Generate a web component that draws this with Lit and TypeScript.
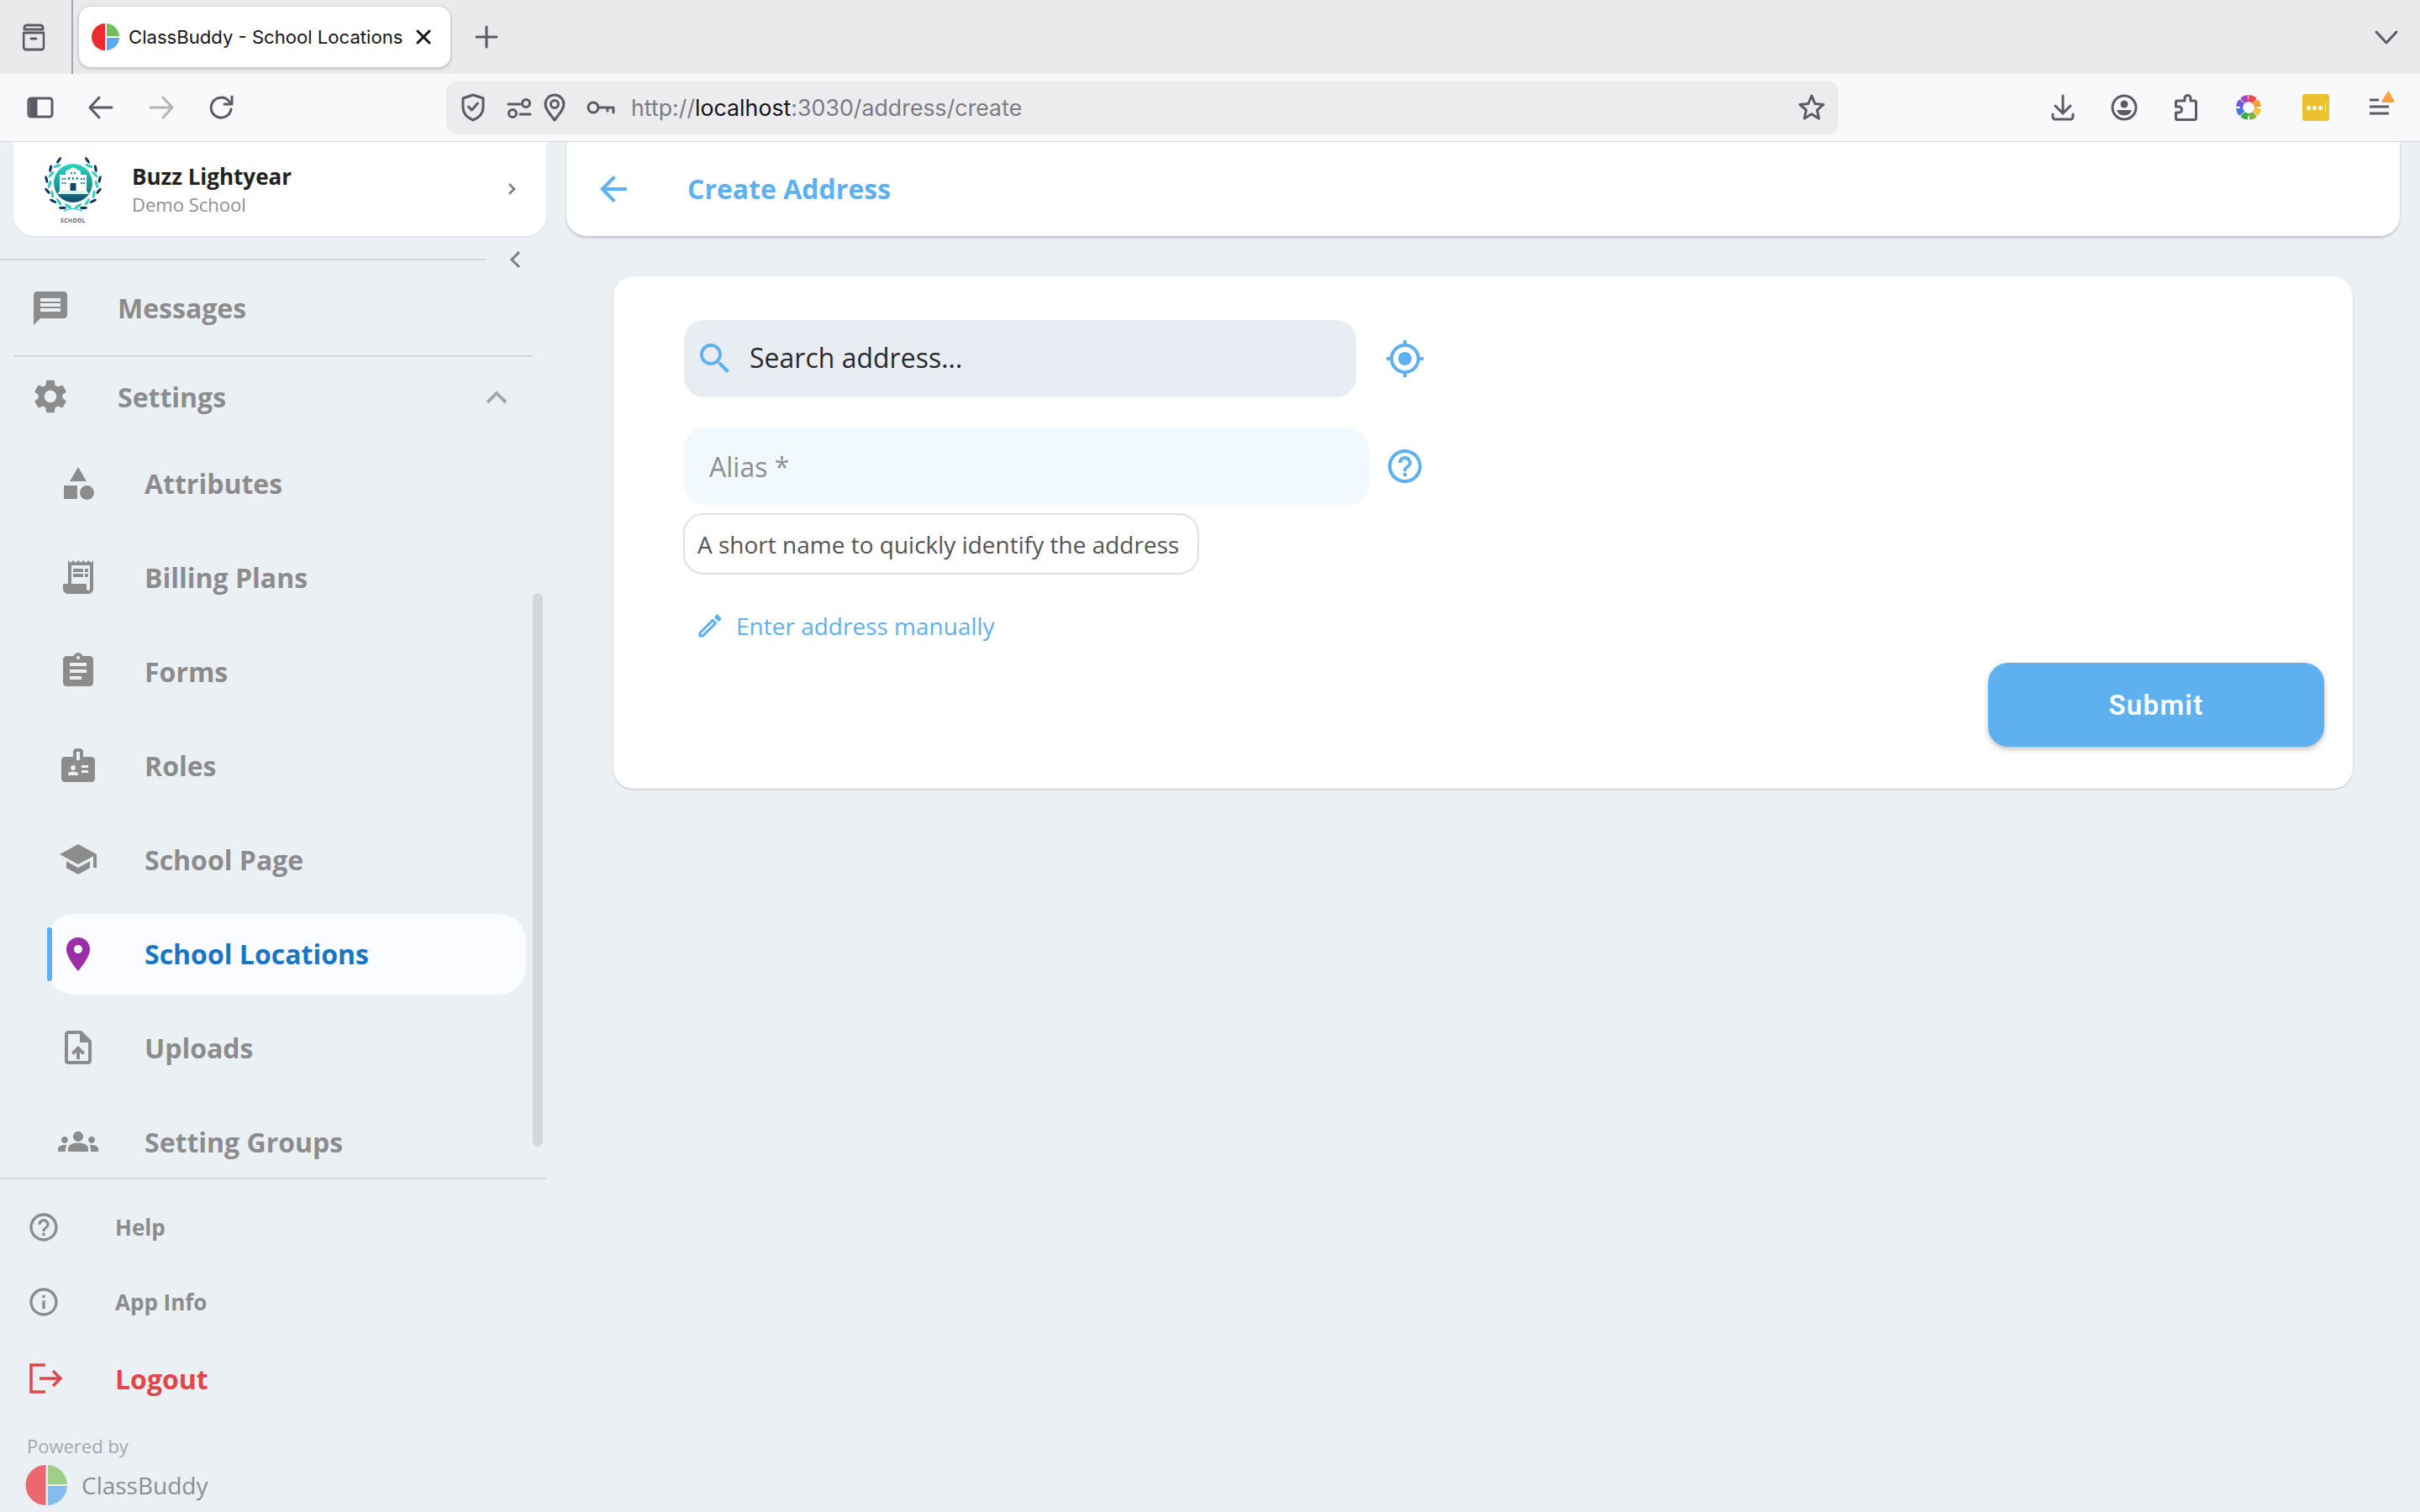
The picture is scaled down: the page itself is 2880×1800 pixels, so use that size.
import { LitElement, css, html, svg } from "lit";
import { customElement } from "lit/decorators.js";

const P = {
  message:
    "M20 2H4c-1.1 0-1.99.9-1.99 2L2 22l4-4h14c1.1 0 2-.9 2-2V4c0-1.1-.9-2-2-2zm-2 12H6v-2h12v2zm0-3H6V9h12v2zm0-3H6V6h12v2z",
  gear: "M19.14 12.94c.04-.3.06-.61.06-.94 0-.32-.02-.64-.07-.94l2.03-1.58c.18-.14.23-.41.12-.61l-1.92-3.32c-.12-.22-.37-.29-.59-.22l-2.39.96c-.5-.38-1.03-.7-1.62-.94l-.36-2.54c-.04-.24-.24-.41-.48-.41h-3.84c-.24 0-.43.17-.47.41l-.36 2.54c-.59.24-1.13.57-1.62.94l-2.39-.96c-.22-.08-.47 0-.59.22L2.74 8.87c-.12.21-.08.47.12.61l2.03 1.58c-.05.3-.09.63-.09.94s.02.64.07.94l-2.03 1.58c-.18.14-.23.41-.12.61l1.92 3.32c.12.22.37.29.59.22l2.39-.96c.5.38 1.03.7 1.62.94l.36 2.54c.05.24.24.41.48.41h3.84c.24 0 .44-.17.47-.41l.36-2.54c.59-.24 1.13-.56 1.62-.94l2.39.96c.22.08.47 0 .59-.22l1.92-3.32c.12-.22.07-.47-.12-.61l-2.01-1.58zM12 15.6c-1.98 0-3.6-1.62-3.6-3.6s1.62-3.6 3.6-3.6 3.6 1.62 3.6 3.6-1.62 3.6-3.6 3.6z",
  shapes:
    "M12 2.5 7 11h10zM3.500 13.500h8v8h-8zM17.250 13.500a4.250 4.250 0 1 0 0 8.500 4.250 4.250 0 0 0 0-8.500z",
  receipt:
    "M19.500 3.500 18 2l-1.500 1.500L15 2l-1.500 1.500L12 2l-1.500 1.500L9 2 7.500 3.500 6 2v14H3v3c0 1.660 1.340 3 3 3h12c1.660 0 3-1.340 3-3V2l-1.500 1.500zM19 19c0 .550-.450 1-1 1s-1-.450-1-1v-3H8V5h11v14zM9 7h6v2H9zm7 0h2v2h-2zM9 10h6v2H9zm7 0h2v2h-2z",
  forms:
    "M19 3h-4.180C14.400 1.840 13.300 1 12 1c-1.300 0-2.400.840-2.820 2H5c-1.100 0-2 .900-2 2v14c0 1.100.900 2 2 2h14c1.100 0 2-.900 2-2V5c0-1.100-.900-2-2-2zm-7 0c.550 0 1 .450 1 1s-.450 1-1 1-1-.450-1-1 .450-1 1-1zm2 14H7v-2h7v2zm3-4H7v-2h10v2zm0-4H7V7h10v2z",
  badge:
    "M20 7h-5V4c0-1.100-.900-2-2-2h-2c-1.100 0-2 .900-2 2v3H4c-1.100 0-2 .900-2 2v11c0 1.100.900 2 2 2h16c1.100 0 2-.900 2-2V9c0-1.100-.900-2-2-2zM9 12c.830 0 1.500.670 1.500 1.500S9.830 15 9 15s-1.500-.670-1.500-1.500S8.170 12 9 12zm3 6H6v-.430c0-.600.360-1.150.920-1.390.640-.280 1.340-.430 2.080-.430s1.440.150 2.080.430c.550.240.920.780.920 1.390V18zm1-9h-2V4h2v5zm5 7.500h-4V15h4v1.500zm0-3h-4V12h4v1.500z",
  school: "M5 13.180v4L12 21l7-3.820v-4L12 17l-7-3.820zM12 3 1 9l11 6 9-4.910V17h2V9L12 3z",
  place:
    "M12 2C8.130 2 5 5.130 5 9c0 5.250 7 13 7 13s7-7.750 7-13c0-3.870-3.130-7-7-7zm0 9.500c-1.380 0-2.500-1.120-2.500-2.500s1.120-2.500 2.500-2.500 2.500 1.120 2.500 2.500-1.120 2.500-2.500 2.500z",
  upload:
    "M14 2H6c-1.100 0-1.990.900-1.990 2L4 20c0 1.100.890 2 1.990 2H18c1.100 0 2-.900 2-2V8l-6-6zm4 18H6V4h7v5h5v11zM8 15.010l1.410 1.410L11 14.840V19h2v-4.160l1.590 1.590L16 15.010 12.010 11z",
  groups:
    "M12 12.750c1.630 0 3.070.390 4.240.900 1.080.480 1.760 1.560 1.760 2.730V18H6v-1.610c0-1.180.680-2.260 1.760-2.730 1.170-.520 2.610-.910 4.240-.910zM4 13c1.100 0 2-.900 2-2s-.900-2-2-2-2 .900-2 2 .900 2 2 2zm1.130 1.100c-.370-.060-.740-.100-1.130-.100-.990 0-1.930.210-2.780.580C.480 14.900 0 15.620 0 16.430V18h4.500v-1.610c0-.830.230-1.610.630-2.290zM20 13c1.100 0 2-.900 2-2s-.900-2-2-2-2 .900-2 2 .900 2 2 2zm4 3.430c0-.810-.480-1.530-1.220-1.850-.850-.370-1.790-.580-2.780-.580-.390 0-.760.040-1.130.100.400.680.630 1.460.630 2.290V18H24v-1.570zM12 6c1.660 0 3 1.340 3 3s-1.340 3-3 3-3-1.340-3-3 1.340-3 3-3z",
  help: "M11 18h2v-2h-2v2zm1-16C6.480 2 2 6.480 2 12s4.480 10 10 10 10-4.480 10-10S17.520 2 12 2zm0 18c-4.410 0-8-3.590-8-8s3.590-8 8-8 8 3.590 8 8-3.590 8-8 8zm0-14c-2.210 0-4 1.790-4 4h2c0-1.100.900-2 2-2s2 .900 2 2c0 2-3 1.750-3 5h2c0-2.250 3-2.500 3-5 0-2.210-1.790-4-4-4z",
  info: "M11 7h2v2h-2zm0 4h2v6h-2zm1-9C6.480 2 2 6.480 2 12s4.480 10 10 10 10-4.480 10-10S17.520 2 12 2zm0 18c-4.410 0-8-3.590-8-8s3.590-8 8-8 8 3.590 8 8-3.590 8-8 8z",
  search:
    "M15.500 14h-.790l-.280-.270C15.410 12.590 16 11.110 16 9.500 16 5.910 13.090 3 9.500 3S3 5.910 3 9.500 5.910 16 9.500 16c1.610 0 3.090-.590 4.230-1.570l.270.280v.790l5 4.990L20.490 19l-4.990-5zm-6 0C7.010 14 5 11.990 5 9.500S7.010 5 9.500 5 14 7.010 14 9.500 11.990 14 9.500 14z",
  gps: "M12 8c-2.210 0-4 1.790-4 4s1.790 4 4 4 4-1.790 4-4-1.790-4-4-4zm8.940 3c-.460-4.170-3.770-7.480-7.940-7.940V1h-2v2.060C6.830 3.520 3.520 6.830 3.060 11H1v2h2.060c.460 4.170 3.770 7.480 7.940 7.940V23h2v-2.060c4.170-.460 7.480-3.770 7.940-7.940H23v-2h-2.060zM12 19c-3.870 0-7-3.130-7-7s3.130-7 7-7 7 3.130 7 7-3.130 7-7 7z",
  edit: "M3 17.250V21h3.750L17.810 9.940l-3.750-3.750L3 17.250zM5.920 19H5v-.920l9.060-9.060.920.920L5.920 19zM20.710 5.630l-2.340-2.340c-.200-.200-.450-.290-.710-.290s-.510.100-.700.290l-1.830 1.830 3.750 3.750 1.830-1.830c.390-.390.390-1.020 0-1.410z",
  back: "M20 11H7.830l5.590-5.590L12 4l-8 8 8 8 1.410-1.410L7.830 13H20v-2z",
};

const icon = (d: string, cls = "") =>
  html`<svg class="ico ${cls}" viewBox="0 0 24 24"><path d=${d}></path></svg>`;

const settingsRows = [
  { label: "Attributes", d: P.shapes },
  { label: "Billing Plans", d: P.receipt },
  { label: "Forms", d: P.forms },
  { label: "Roles", d: P.badge },
  { label: "School Page", d: P.school },
  { label: "School Locations", d: P.place, active: true },
  { label: "Uploads", d: P.upload },
  { label: "Setting Groups", d: P.groups },
];

// one half of the crest's wreath, the other half is this one mirrored
function wreathHalf() {
  const leaf = (theta: number, r: number, tilt: number, fill: string, ry: number) => {
    const a = (theta * Math.PI) / 180;
    const x = 37 + Math.sin(a) * r;
    const y = 32 - Math.cos(a) * r;
    return svg`<ellipse cx=${x} cy=${y} rx="1.600" ry=${ry} fill=${fill} transform="rotate(${theta + 90 + tilt} ${x} ${y})"></ellipse>`;
  };
  const out = [];
  for (let i = 0; i < 6; i++) {
    const theta = 32 + i * 25;
    out.push(leaf(theta, 32, 22, "#14305f", 4.4));
    out.push(leaf(theta + 11, 28, -20, "#2ecfbd", 4.8));
  }
  return out;
}

@customElement("app-root")
export class AppRoot extends LitElement {
  static styles = css`
    :host {
      display: block;
      width: 2880px;
      height: 1800px;
      overflow: hidden;
      background: #ebf0f5;
      font-family: "Open Sans", "Noto Sans", sans-serif;
    }
    svg {
      display: block;
      flex: none;
      overflow: visible;
    }
    .ico {
      width: 48px;
      height: 48px;
      fill: currentColor;
    }
    .line {
      fill: none;
      stroke: #5b5b66;
      stroke-width: 3;
      stroke-linecap: round;
      stroke-linejoin: round;
    }
    .line.dark {
      stroke: #15141a;
    }
    .line.dim {
      stroke: #b4b4b9;
    }
    .line.butt {
      stroke-linecap: butt;
    }

    /* browser chrome */
    .tabbar {
      height: 88px;
      background: #eaeaed;
      display: flex;
      align-items: center;
    }
    .tab-side {
      width: 85px;
      height: 88px;
      border-right: 2px solid #a5a5ab;
      box-sizing: content-box;
      display: flex;
      align-items: center;
    }
    .tab-side svg {
      margin-left: 24px;
    }
    .tab {
      margin-left: 7px;
      width: 442px;
      height: 72px;
      border-radius: 14px;
      background: #fff;
      box-shadow: 0 1px 4px rgba(0, 0, 0, 0.28);
      display: flex;
      align-items: center;
      padding-left: 16px;
      box-sizing: border-box;
      font: 400 22.100px "Inter", sans-serif;
      color: #15141a;
      white-space: nowrap;
    }
    .tab-title {
      margin-left: 11px;
      width: 341px;
    }
    .newtab {
      margin-left: 29px;
    }
    .tab-end {
      margin-left: auto;
      margin-right: 26px;
    }
    .toolbar {
      height: 80px;
      border-bottom: 1px solid #d6d6d9;
      box-sizing: content-box;
      background: #f9f9fb;
      display: flex;
      align-items: center;
    }
    .nav {
      margin-left: 12px;
      display: grid;
      grid-template-columns: repeat(4, 72px);
      justify-items: center;
      align-items: center;
    }
    .urlbar {
      margin-left: 231px;
      width: 1657px;
      height: 64px;
      border-radius: 14px;
      background: #ececef;
      display: grid;
      grid-template-columns: 64px 46px 38px 72px 1fr 64px;
      justify-items: center;
      align-items: center;
    }
    .url {
      justify-self: start;
      font: 400 26.750px "Inter", sans-serif;
      color: #7b7b82;
      white-space: nowrap;
    }
    .url b {
      font-weight: 400;
      color: #15141a;
    }
    .tools {
      margin-left: 230px;
      display: grid;
      grid-template-columns: 73px 73px 74px 75px 86px 66px;
      justify-items: center;
      align-items: center;
    }
    .wheel {
      width: 30px;
      height: 30px;
      border-radius: 50%;
      background: conic-gradient(
        #f04c4c 3deg 42deg,
        #fff 42deg 48deg,
        #f7a02d 48deg 87deg,
        #fff 87deg 93deg,
        #fcc232 93deg 132deg,
        #fff 132deg 138deg,
        #7cb82f 138deg 177deg,
        #fff 177deg 183deg,
        #38ad55 183deg 222deg,
        #fff 222deg 228deg,
        #4a72e8 228deg 267deg,
        #fff 267deg 273deg,
        #7456e0 273deg 312deg,
        #fff 312deg 318deg,
        #a946c8 318deg 357deg,
        #fff 357deg 3deg
      );
      -webkit-mask: radial-gradient(circle, transparent 6.500px, #000 7px);
      mask: radial-gradient(circle, transparent 6.500px, #000 7px);
    }
    .lastpass {
      width: 32px;
      height: 32px;
      border-radius: 3px;
      background: #ecc02e;
      display: flex;
      align-items: center;
      justify-content: center;
      gap: 2px;
    }
    .lastpass i {
      width: 5px;
      height: 5px;
      border-radius: 50%;
      background: #fff;
    }
    .lastpass u {
      width: 1px;
      height: 12px;
      margin-left: 1px;
      background: #fff;
    }

    /* page */
    .page {
      display: flex;
      height: 1631px;
    }
    .sidebar {
      width: 650px;
      flex: none;
      color: #8c8c8c;
    }
    .who {
      margin-left: 16px;
      width: 634px;
      height: 112px;
      border-radius: 0 0 24px 24px;
      background: #fff;
      box-sizing: border-box;
      padding-left: 34px;
      display: flex;
      align-items: center;
      box-shadow: 0 1px 2px rgba(0, 0, 0, 0.08);
    }
    .who-logo {
      margin-top: 6px;
    }
    .who-text {
      margin-left: 31px;
      flex: 1;
    }
    .who-name {
      font-size: 26px;
      font-weight: 700;
      line-height: 36px;
      color: #222;
    }
    .who-sub {
      font-size: 22px;
      line-height: 30px;
      color: #8f8f8f;
    }
    .who-arrow {
      margin-right: 31px;
      color: #7d7d7d;
    }
    .collapse {
      margin-top: 27px;
      height: 2px;
      display: flex;
      align-items: center;
    }
    .collapse span {
      width: 578px;
      height: 2px;
      background: #d3d8dc;
    }
    .collapse svg {
      margin-left: 22px;
    }
    .menu {
      position: relative;
      height: 1092px;
      overflow: hidden;
    }
    .thumb {
      position: absolute;
      left: 634px;
      top: 396px;
      width: 12px;
      height: 659px;
      border-radius: 6px;
      background: #d2d8dc;
    }
    .row {
      display: flex;
      align-items: center;
      font-size: 32px;
      font-weight: 700;
      white-space: nowrap;
    }
    .top {
      height: 113px;
      padding-left: 36px;
      gap: 56px;
    }
    .top.settings {
      height: 94px;
    }
    .sep {
      margin-left: 16px;
      width: 618px;
      height: 2px;
      background: #d3d8dc;
    }
    .caret {
      margin-left: auto;
      margin-right: 45px;
    }
    .sub {
      height: 112px;
      padding-left: 69px;
      gap: 55px;
    }
    .sub.active {
      height: 96px;
      margin: 9px 24px 7px 56px;
      padding-left: 13px;
      position: relative;
      border-radius: 32px;
      background: #fafcff;
      color: #1976c2;
    }
    .sub.active span {
      margin-bottom: 2px;
    }
    .sub.active::before {
      content: "";
      position: absolute;
      left: 0;
      top: 16px;
      width: 6px;
      height: 64px;
      border-radius: 3px;
      background: #5fb0ee;
    }
    .sub.active .ico {
      color: #9c2ea8;
    }
    .foot {
      border-top: 2px solid #d3d8dc;
      padding-top: 13px;
    }
    .foot .row {
      height: 88.500px;
      padding-left: 32px;
      gap: 65px;
      font-size: 26px;
    }
    .foot .ico {
      width: 40px;
      height: 40px;
    }
    .foot .row.logout {
      height: 94px;
      font-size: 32px;
      color: #e0474c;
      padding-left: 35px;
      gap: 62px;
    }
    .powered {
      margin: 18px 0 8px 32px;
      font-size: 22px;
      line-height: 30px;
      color: #a5a8ab;
    }
    .brand {
      margin-left: 32px;
      display: flex;
      align-items: center;
      gap: 17px;
      font-size: 28px;
      color: #8a8f93;
    }

    .main {
      flex: 1;
    }
    .head {
      margin-left: 24px;
      width: 2182px;
      height: 112px;
      border-radius: 0 0 24px 24px;
      background: #fff;
      box-shadow: 0 2px 3px rgba(0, 0, 0, 0.2);
      display: flex;
      align-items: center;
      padding-left: 32px;
      box-sizing: border-box;
      gap: 64px;
      color: #5fb0ee;
      font-size: 32px;
      font-weight: 700;
    }
    .head span {
      margin-bottom: 2px;
    }
    .card {
      margin: 48px 0 0 80px;
      width: 2070px;
      border-radius: 24px;
      background: #fff;
      box-shadow: 0 1px 2px rgba(0, 0, 0, 0.2);
      box-sizing: border-box;
      padding: 52px 34px 50px 84px;
    }
    .field-row {
      display: flex;
      align-items: center;
      color: #5fb0ee;
    }
    .search {
      width: 800px;
      height: 92px;
      border-radius: 24px;
      background: #e8edf4;
      display: flex;
      align-items: center;
      padding-left: 13px;
      gap: 17px;
      box-sizing: border-box;
      margin-right: 34px;
      font-size: 32px;
      color: #2a2a2a;
    }
    .search .ico {
      color: #5fb0ee;
    }
    .search span {
      margin-bottom: 4px;
    }
    .alias {
      margin-top: 36px;
    }
    .alias-box {
      width: 815px;
      height: 92px;
      border-radius: 24px;
      background: #f1f8fe;
      box-sizing: border-box;
      padding-left: 30px;
      display: flex;
      align-items: center;
      margin-right: 19px;
      font-size: 32px;
      color: #8f8f8f;
    }
    .hint {
      margin: 10px 0 0 -1px;
      width: 614px;
      height: 73px;
      border: 2px solid #e0e0e0;
      border-radius: 24px;
      box-sizing: border-box;
      padding-left: 15px;
      display: flex;
      align-items: center;
      font-size: 28px;
      color: #555;
      white-space: nowrap;
    }
    .manual {
      margin: 45px 0 0 13px;
      height: 32px;
      display: flex;
      align-items: center;
      gap: 13px;
      font-size: 28px;
      color: #5fb0ee;
    }
    .manual .ico {
      width: 36px;
      height: 36px;
    }
    .actions {
      margin-top: 28px;
      display: flex;
      justify-content: flex-end;
    }
    .submit {
      width: 400px;
      height: 100px;
      border: none;
      border-radius: 24px;
      background: #5fb0ee;
      box-shadow: 0 3px 6px rgba(0, 0, 0, 0.25);
      color: #fff;
      font: 600 33px "Roboto", sans-serif;
      letter-spacing: 1.300px;
    }
  `;

  renderLogo() {
    return html`<svg class="who-logo" width="76" height="84" viewBox="0 0 76 84">
      <defs>
        <linearGradient id="crest" x1="0" y1="0" x2="0" y2="1">
          <stop offset="0" stop-color="#2ad6bd"></stop>
          <stop offset="0.6" stop-color="#19958f"></stop>
          <stop offset="1" stop-color="#14466e"></stop>
        </linearGradient>
      </defs>
      <g>${wreathHalf()}</g>
      <g transform="translate(74 0) scale(-1 1)">${wreathHalf()}</g>
      <circle cx="37" cy="32" r="23" fill="url(#crest)"></circle>
      <path d="M37 13l9 5v4h7v19H21V22h7v-4z" fill="#fff"></path>
      <g fill="#1a8f92">
        <rect x="34" y="19" width="2.200" height="2.200"></rect>
        <rect x="38" y="19" width="2.200" height="2.200"></rect>
        <rect x="31" y="25" width="2.200" height="3"></rect>
        <rect x="35.800" y="25" width="2.200" height="3"></rect>
        <rect x="40.500" y="25" width="2.200" height="3"></rect>
        <rect x="23.500" y="26" width="2" height="2"></rect>
        <rect x="26.500" y="26" width="2" height="2"></rect>
        <rect x="23.500" y="31" width="2" height="2"></rect>
        <rect x="26.500" y="31" width="2" height="2"></rect>
        <rect x="46" y="26" width="2" height="2"></rect>
        <rect x="49" y="26" width="2" height="2"></rect>
        <rect x="46" y="31" width="2" height="2"></rect>
        <rect x="49" y="31" width="2" height="2"></rect>
      </g>
      <rect x="33.500" y="32" width="7" height="9" fill="#14466e"></rect>
      <path d="M21 41h32l3 4H18z" fill="#d9f4f1"></path>
      <path d="M26 65q11-5 22 0" fill="none" stroke="#2ecfbd" stroke-width="1.500"></path>
      <text
        x="37"
        y="79"
        text-anchor="middle"
        font-family="Open Sans, sans-serif"
        font-size="6.500"
        font-weight="600"
        letter-spacing="0.600"
        fill="#14305f"
      >SCHOOL</text>
    </svg>`;
  }

  renderBrowser() {
    return html`
      <div class="tabbar">
        <div class="tab-side">
          <svg width="32" height="32" viewBox="0 0 32 32" class="line">
            <path d="M2 11h28v17a3 3 0 0 1-3 3H5a3 3 0 0 1-3-3z" transform="translate(2.500 0) scale(.85 1)"></path>
            <path d="M8 2h16a3 3 0 0 1 3 3v2H5V5a3 3 0 0 1 3-3zM13 18h6"></path>
          </svg>
        </div>
        <div class="tab">
          <svg width="32" height="32" viewBox="0 0 32 32">
            <path d="M15 0a16 16 0 0 0 0 32z" fill="#ee2b30"></path>
            <path d="M17 0a16 16 0 0 1 15 15H17z" fill="#72bd5c"></path>
            <path d="M17 17h15a16 16 0 0 1-15 15z" fill="#5ba8ee"></path>
          </svg>
          <span class="tab-title">ClassBuddy - School Locations</span>
          <svg width="20" height="20" viewBox="0 0 20 20" class="line dark">
            <path d="M3 3l14 14M17 3 3 17"></path>
          </svg>
        </div>
        <svg class="line newtab" width="28" height="28" viewBox="0 0 28 28">
          <path d="M14 2v24M2 14h24"></path>
        </svg>
        <svg class="line tab-end" width="28" height="28" viewBox="0 0 28 28">
          <path d="M2 8l12 13L26 8"></path>
        </svg>
      </div>
      <div class="toolbar">
        <div class="nav">
          <svg class="line" width="32" height="32" viewBox="0 0 32 32">
            <rect x="2" y="5" width="28" height="22" rx="3"></rect>
            <path d="M5 7h6v18H5z" fill="#5b5b66"></path>
          </svg>
          <svg class="line" width="32" height="32" viewBox="0 0 32 32">
            <path d="M29 16H3M14 4 3 16l11 12"></path>
          </svg>
          <svg class="line dim" width="32" height="32" viewBox="0 0 32 32">
            <path d="M3 16h26M18 4l11 12-11 12"></path>
          </svg>
          <svg class="line" width="32" height="32" viewBox="0 0 32 32">
            <path d="M27 18a12 12 0 1 1-3-10l4 4M28 3v9h-9"></path>
          </svg>
        </div>
        <div class="urlbar">
          <svg class="line" width="32" height="34" viewBox="0 0 32 34">
            <path d="M16 2l12 4v11c0 7-5 12-12 15C9 29 4 24 4 17V6z"></path>
            <path d="M10.500 16l4 4 7-8"></path>
          </svg>
          <svg class="line" width="30" height="28" viewBox="0 0 30 28">
            <path d="M2 10h14M16 22h12"></path>
            <circle cx="23" cy="9" r="4.500"></circle>
            <circle cx="7" cy="21" r="4.500"></circle>
          </svg>
          <svg class="line" width="28" height="34" viewBox="0 0 28 34">
            <path d="M14 32C8 24 3 19 3 13a11 11 0 0 1 22 0c0 6-5 11-11 19z"></path>
            <circle cx="14" cy="13" r="4.500"></circle>
          </svg>
          <svg class="line" width="34" height="20" viewBox="0 0 34 20">
            <circle cx="8" cy="10" r="6"></circle>
            <path d="M14 10h18v6M25 10v4"></path>
          </svg>
          <span class="url">http://<b>localhost</b>:3030/address/create</span>
          <svg class="line" width="34" height="34" viewBox="0 0 34 34">
            <path
              d="M17 3l4 9.500 10 .9-7.500 6.700 2.200 10L17 24.800 8.300 30l2.200-10L3 13.400l10-.9z"
            ></path>
          </svg>
        </div>
        <div class="tools">
          <svg class="line" width="30" height="32" viewBox="0 0 30 32">
            <path d="M15 2v20M6 14l9 9 9-9M3 24v3a3 3 0 0 0 3 3h18a3 3 0 0 0 3-3v-3"></path>
          </svg>
          <svg width="32" height="32" viewBox="0 0 32 32">
            <circle class="line" cx="16" cy="16" r="14"></circle>
            <circle cx="16" cy="12" r="4.500" fill="#5b5b66"></circle>
            <path d="M7 19h18a9.500 9.500 0 0 1-18 0z" fill="#5b5b66"></path>
          </svg>
          <svg class="line" width="28" height="32" viewBox="0 0 28 32">
            <path
              d="M13 7V5a3.500 3.500 0 0 1 7 0v3h5a1.500 1.500 0 0 1 1.500 1.500V29a1.500 1.500 0 0 1-1.500 1.500H4A1.500 1.500 0 0 1 2.500 29V22H6a3.500 3.500 0 0 0 0-7H2.500V9.500A1.500 1.500 0 0 1 4 8h9z"
            ></path>
          </svg>
          <div class="wheel"></div>
          <div class="lastpass"><i></i><i></i><i></i><u></u></div>
          <svg width="32" height="32" viewBox="0 0 32 32">
            <path class="line butt" d="M4 7h11M4 15h23M4 23h23"></path>
            <path d="M26.500-4l7 12c.5 1-.2 2-1 2h-13c-.8 0-1.500-1-1-2z" fill="#ff9f40"></path>
          </svg>
        </div>
      </div>
    `;
  }

  renderSidebar() {
    return html`
      <aside class="sidebar">
        <div class="who">
          ${this.renderLogo()}
          <div class="who-text">
            <div class="who-name">Buzz Lightyear</div>
            <div class="who-sub">Demo School</div>
          </div>
          <svg class="who-arrow" width="20" height="20" viewBox="0 0 20 20" fill="none" stroke="currentColor" stroke-width="2.500">
            <path d="M7 4l6 6-6 6"></path>
          </svg>
        </div>
        <div class="collapse">
          <span></span>
          <svg width="28" height="28" viewBox="0 0 28 28" fill="none" stroke="#7d7d7d" stroke-width="3">
            <path d="M18 5l-9 9 9 9"></path>
          </svg>
        </div>
        <div class="menu">
          <div class="row top">${icon(P.message)}<span>Messages</span></div>
          <div class="sep"></div>
          <div class="row top settings">
            ${icon(P.gear)}<span>Settings</span>
            <svg class="caret" width="28" height="28" viewBox="0 0 28 28" fill="none" stroke="#a6a6a6" stroke-width="4">
              <path d="M3 21l11-11 11 11"></path>
            </svg>
          </div>
          ${settingsRows.map(
            (r) =>
              html`<div class="row sub ${r.active ? "active" : ""}">
                ${icon(r.d)}<span>${r.label}</span>
              </div>`
          )}
          <div class="thumb"></div>
        </div>
        <div class="foot">
          <div class="row">${icon(P.help)}<span>Help</span></div>
          <div class="row">${icon(P.info)}<span>App Info</span></div>
          <div class="row logout">
            <svg width="40" height="36" viewBox="0 0 40 36" fill="none" stroke="#e0474c" stroke-width="3.500">
              <path d="M19 2H2v32h17M12 18h25M28 9l9 9-9 9"></path>
            </svg>
            <span>Logout</span>
          </div>
          <div class="powered">Powered by</div>
          <div class="brand">
            <svg width="48" height="48" viewBox="0 0 48 48">
              <path d="M22.500 0a24 24 0 0 0 0 48z" fill="#ec6870"></path>
              <path d="M25 0a24 24 0 0 1 23 23H25z" fill="#9cd087"></path>
              <path d="M25 25h23a24 24 0 0 1-23 23z" fill="#84bcf0"></path>
            </svg>
            <span>ClassBuddy</span>
          </div>
        </div>
      </aside>
    `;
  }

  render() {
    return html`
      ${this.renderBrowser()}
      <div class="page">
        ${this.renderSidebar()}
        <main class="main">
          <div class="head">${icon(P.back)}<span>Create Address</span></div>
          <section class="card">
            <div class="field-row">
              <div class="search">
                ${icon(P.search)}
                <span>Search address...</span>
              </div>
              ${icon(P.gps)}
            </div>
            <div class="field-row alias">
              <div class="alias-box">Alias *</div>
              ${icon(P.help)}
            </div>
            <div class="hint">A short name to quickly identify the address</div>
            <div class="manual">${icon(P.edit)}<span>Enter address manually</span></div>
            <div class="actions"><button class="submit">Submit</button></div>
          </section>
        </main>
      </div>
    `;
  }
}
